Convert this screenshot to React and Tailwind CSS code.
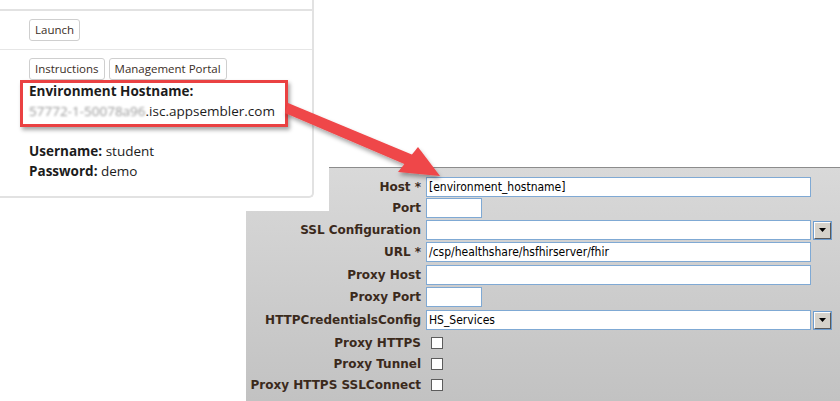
import React from 'react';

const labelFont = { fontFamily: '"DejaVu Sans", Verdana, sans-serif' };
const fieldFont = { fontFamily: '"DejaVu Sans Condensed", "DejaVu Sans", Tahoma, sans-serif' };

const TextInput = ({ value = '', width }) => (
    <div
        className={`h-[20px] bg-white border border-[#7fa9d4] flex items-center px-[2px] text-[12px] text-black whitespace-nowrap overflow-hidden ${width}`}
        style={fieldFont}
    >
        {value}
    </div>
);

const DropButton = () => (
    <div className="ml-[2px] w-[19px] h-[19px] border border-[#6d9ccf] flex">
        <div className="flex-1 bg-[#d6d2ca] border-t border-l border-t-white border-l-white border-b border-r border-b-[#5a5a5a] border-r-[#5a5a5a] flex items-center justify-center">
            <svg width="7" height="4" viewBox="0 0 7 4">
                <path d="M0 0h7L3.5 4z" fill="#000" />
            </svg>
        </div>
    </div>
);

const Checkbox = () => (
    <div className="ml-[5px] w-[12px] h-[12px] bg-white border border-[#5c5c5c]" />
);

const Row = ({ label, height, children }) => (
    <div className={`flex items-center ${height}`}>
        <div
            className="w-[180px] pr-[5px] text-right font-bold text-[12px] text-[#3b2a1c] whitespace-nowrap"
            style={labelFont}
        >
            {label}
        </div>
        <div className="flex items-center">{children}</div>
    </div>
);

const SmallButton = ({ children }) => (
    <button className="h-[22px] px-[5px] border border-[#cfcfcf] rounded-[3px] text-[11.5px] text-[#3a2e26] leading-none">
        {children}
    </button>
);

const LaunchCard = () => (
    <div className="relative z-10 w-[329px] h-[211px] bg-white" style={{ fontFamily: '"Open Sans", sans-serif' }}>
        <div className="w-[314px] h-[198px] border-r-2 border-b-2 border-[#e2e2e2] rounded-br-[5px]">
            <div className="h-[11px] border-b-2 border-[#e2e2e2]" />
            <div className="flex pl-[29px] pt-[8px] pb-[8px] border-b border-[#e6e6e6]">
                <SmallButton>Launch</SmallButton>
            </div>
            <div className="pl-[29px] pt-[8px]">
                <div className="flex gap-[4px]">
                    <SmallButton>Instructions</SmallButton>
                    <SmallButton>Management Portal</SmallButton>
                </div>
                <div className="mt-[1px] text-[13.5px] leading-[20px] font-bold text-[#1c1c1c]">Environment Hostname:</div>
                <div className="text-[13.5px] leading-[20px] text-[#1c1c1c] whitespace-nowrap">
                    <span className="blur-[1.2px] text-[#9a9a9a]">57772-1-50078a96</span>
                    <span>.isc.appsembler.com</span>
                </div>
                <div className="mt-[20px] text-[13.5px] leading-[20px] text-[#1c1c1c]">
                    <span className="font-bold">Username:</span> student
                </div>
                <div className="text-[13.5px] leading-[20px] text-[#1c1c1c]">
                    <span className="font-bold">Password:</span> demo
                </div>
            </div>
        </div>
        <div className="absolute left-[20px] top-[80px] w-[268px] h-[47px] border-[3px] border-[#ea4142] shadow-[2px_3px_4px_rgba(0,0,0,0.35)]" />
    </div>
);

const SettingsPanel = () => (
    <div className="-mt-[44px] ml-[246px] w-[594px] h-[234px] border-t border-[#8c8c8c] bg-gradient-to-b from-[#d9d9d9] to-[#c2c2c2] pt-[8px]">
        <Row label="Host *" height="h-[21px]">
            <TextInput value="[environment_hostname]" width="w-[385px]" />
        </Row>
        <Row label="Port" height="h-[22px]">
            <TextInput width="w-[56px]" />
        </Row>
        <Row label="SSL Configuration" height="h-[22px]">
            <TextInput width="w-[385px]" />
            <DropButton />
        </Row>
        <Row label="URL *" height="h-[22px]">
            <TextInput value="/csp/healthshare/hsfhirserver/fhir" width="w-[385px]" />
        </Row>
        <Row label="Proxy Host" height="h-[23px]">
            <TextInput width="w-[385px]" />
        </Row>
        <Row label="Proxy Port" height="h-[22px]">
            <TextInput width="w-[56px]" />
        </Row>
        <Row label="HTTPCredentialsConfig" height="h-[24px]">
            <TextInput value="HS_Services" width="w-[385px]" />
            <DropButton />
        </Row>
        <Row label="Proxy HTTPS" height="h-[21px]">
            <Checkbox />
        </Row>
        <Row label="Proxy Tunnel" height="h-[21px]">
            <Checkbox />
        </Row>
        <Row label="Proxy HTTPS SSLConnect" height="h-[21px]">
            <Checkbox />
        </Row>
    </div>
);

export default function App() {
    return (
        <div className="relative w-[840px] h-[401px] bg-white overflow-hidden">
            <LaunchCard />
            <SettingsPanel />
            <svg
                className="absolute inset-0 z-20 pointer-events-none"
                width="840"
                height="401"
                viewBox="0 0 840 401"
            >
                <defs>
                    <filter id="arrowShadow" x="-20%" y="-20%" width="140%" height="160%">
                        <feDropShadow dx="1" dy="3" stdDeviation="2" floodColor="#000" floodOpacity="0.35" />
                    </filter>
                </defs>
                <g filter="url(#arrowShadow)" fill="#ef4648" stroke="none">
                    <path d="M288 103 L413 155 L409 166 L285 113 Z" />
                    <path d="M398 172 L418 147 L440 176 Z" />
                </g>
            </svg>
        </div>
    );
}
